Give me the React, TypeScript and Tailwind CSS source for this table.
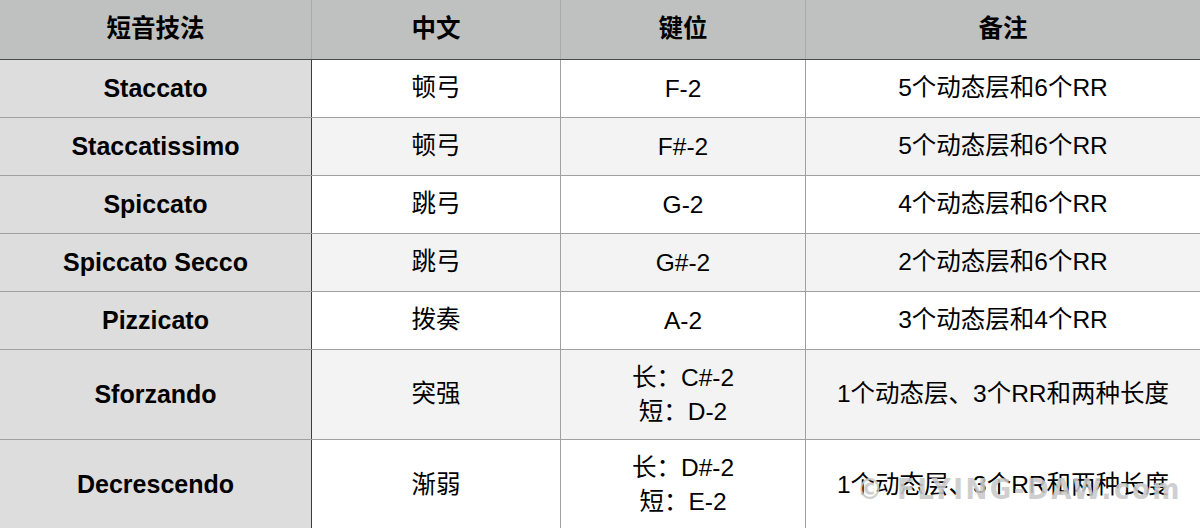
import React from "react"

const rows = [
  { name: "Staccato", cn: "顿弓", keys: ["F-2"], note: "5个动态层和6个RR" },
  { name: "Staccatissimo", cn: "顿弓", keys: ["F#-2"], note: "5个动态层和6个RR" },
  { name: "Spiccato", cn: "跳弓", keys: ["G-2"], note: "4个动态层和6个RR" },
  { name: "Spiccato Secco", cn: "跳弓", keys: ["G#-2"], note: "2个动态层和6个RR" },
  { name: "Pizzicato", cn: "拨奏", keys: ["A-2"], note: "3个动态层和4个RR" },
  { name: "Sforzando", cn: "突强", keys: ["长：C#-2", "短：D-2"], note: "1个动态层、3个RR和两种长度" },
  { name: "Decrescendo", cn: "渐弱", keys: ["长：D#-2", "短：E-2"], note: "1个动态层、3个RR和两种长度" },
]

const font = { fontFamily: '"Liberation Sans", "Noto Sans CJK SC", sans-serif' }

export default function App() {
  return (
    <div className="relative w-[1200px] h-[528px] overflow-hidden bg-white text-black" style={font}>
      {/* header */}
      <div className="grid grid-cols-[312px_249px_245px_1fr] h-[60px] bg-[#bfc1c0] border-b border-[#4a4a4a] text-[24.5px] font-bold">
        <div className="flex items-center justify-center border-r border-[#a8aaa9]">短音技法</div>
        <div className="flex items-center justify-center border-r border-[#a8aaa9]">中文</div>
        <div className="flex items-center justify-center border-r border-[#a8aaa9]">键位</div>
        <div className="flex items-center justify-center">备注</div>
      </div>

      {rows.map((r, i) => (
        <div
          key={r.name}
          className={
            "grid grid-cols-[312px_249px_245px_1fr] text-[24.5px] " +
            (r.keys.length > 1 ? "h-[90px] " : "h-[58px] ") +
            (i < rows.length - 1 ? "border-b border-[#a0a0a0] " : "") +
            (i % 2 === 1 ? "bg-[#f3f3f3]" : "bg-white")
          }
        >
          <div className="flex items-center justify-center bg-[#dddddd] border-r border-[#3c3c3c] font-bold text-[25px]">
            {r.name}
          </div>
          <div className="flex items-center justify-center border-r border-[#a0a0a0]">{r.cn}</div>
          <div className="flex flex-col items-center justify-center border-r border-[#a0a0a0] leading-[34px]">
            {r.keys.map((k) => (
              <span key={k}>{k}</span>
            ))}
          </div>
          <div className="flex items-center justify-center">{r.note}</div>
        </div>
      ))}

      {/* watermark */}
      <div
        className="absolute right-[18px] top-[475px] whitespace-nowrap leading-none text-[29px] font-bold tracking-[2.5px] text-[#c9c9c9]/90 select-none"
        style={{ fontFamily: '"DejaVu Sans Condensed", "DejaVu Sans", sans-serif' }}
      >
        © FLYING-DAW.com
      </div>
    </div>
  )
}
